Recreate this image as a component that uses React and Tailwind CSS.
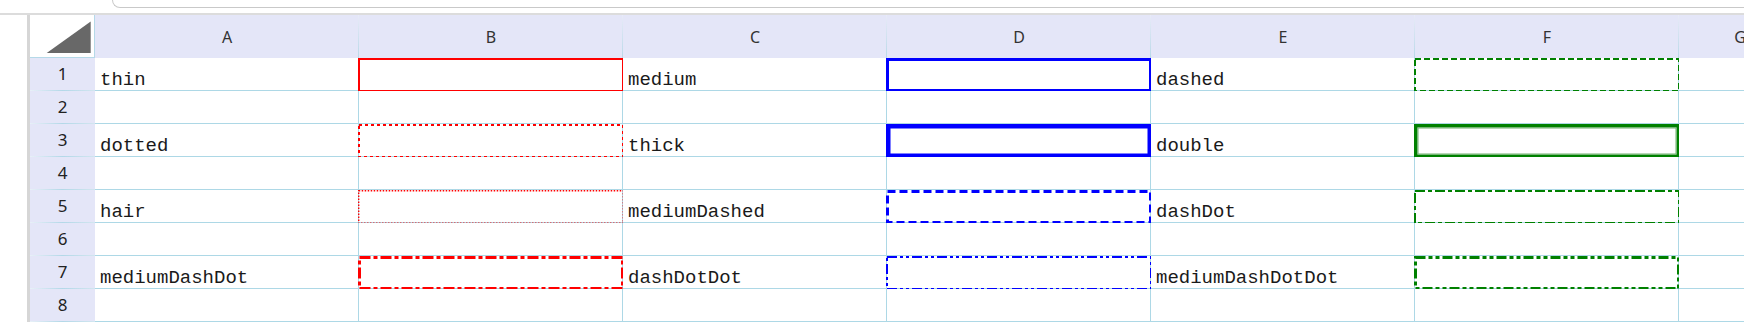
const RED = "#ff0000";
const BLUE = "#0000ff";
const GREEN = "#008000";

// border styles keyed by the name written in the cell beside them
const styles = {
  thin: { w: 2 },
  medium: { w: 3 },
  thick: { w: 4.5 },
  dashed: { w: 2, dash: "6 3" },
  dotted: { w: 2, dash: "3 3" },
  double: { w: 3.5, double: true },
  hair: { w: 1.4, dash: "1.5 1.5" },
  mediumDashed: { w: 3, dash: "8 4" },
  dashDot: { w: 2, dash: "10 3 4 3" },
  mediumDashDot: { w: 3, dash: "11 3 4 3" },
  dashDotDot: { w: 2, dash: "10 3 3 3 3 3" },
  mediumDashDotDot: { w: 3, dash: "10 3 4 3 4 3" },
};

const rows = [
  [["thin", RED], ["medium", BLUE], ["dashed", GREEN]],
  null,
  [["dotted", RED], ["thick", BLUE], ["double", GREEN]],
  null,
  [["hair", RED], ["mediumDashed", BLUE], ["dashDot", GREEN]],
  null,
  [["mediumDashDot", RED], ["dashDotDot", BLUE], ["mediumDashDotDot", GREEN]],
  null,
];

const cols = ["A", "B", "C", "D", "E", "F", "G"];

function BorderBox({ name, color }) {
  const s = styles[name];
  const W = 266;
  const H = 34;
  const h = s.w / 2;
  return (
    <svg
      width={W}
      height={H}
      className="absolute -left-px top-0 pointer-events-none"
    >
      <rect
        x={h}
        y={h}
        width={W - s.w}
        height={H - s.w}
        fill="none"
        stroke={color}
        strokeWidth={s.w}
        strokeDasharray={s.dash}
      />
      {s.double && (
        <rect
          x={s.w + 0.5}
          y={s.w + 0.5}
          width={W - 2 * s.w - 1}
          height={H - 2 * s.w - 1}
          fill="none"
          stroke="#6fae6f"
          strokeWidth={1}
        />
      )}
    </svg>
  );
}

function Cell({ children }) {
  return (
    <div className="relative border-r border-b border-[#add8e6] bg-white pl-[5px] pt-[11px] text-[19px] leading-[22px] text-[#1a1a1a] whitespace-nowrap font-['Liberation_Mono',monospace]">
      {children}
    </div>
  );
}

export default function App() {
  return (
    <div className="w-[1744px] h-[322px] overflow-hidden bg-white flex flex-col">
      <div className="h-[15px] shrink-0 bg-white border-b-2 border-[#dcdcdc]">
        <div className="ml-[112px] h-[8px] border-l border-b border-[#c9c9c9] rounded-bl-[10px]" />
      </div>
      <div className="flex flex-1 min-h-0">
        <div className="w-[27px] shrink-0 bg-white" />
        <div className="w-[3px] shrink-0 bg-[#d6d6d6]" />
        <div className="grid grid-cols-[65px_repeat(6,264px)_122px] grid-rows-[43px_repeat(8,33px)] shrink-0">
          <div className="bg-white border-r border-b border-[#b5d9e8]">
            <svg width="64" height="42">
              <polygon points="16.7,38 60.7,6.5 60.7,38" fill="#686868" />
            </svg>
          </div>
          {cols.map((c) => (
            <div
              key={c}
              className="relative flex items-center justify-center bg-[#e4e6f8] text-[16px] text-[#333] font-['Noto_Sans',sans-serif]"
            >
              {c}
              <div className="absolute right-0 top-0 bottom-0 w-px bg-gradient-to-b from-[#e8ebf8] to-[#b9d9e8]" />
            </div>
          ))}
          {rows.map((r, i) => (
            <Row key={i} n={i + 1} data={r} />
          ))}
        </div>
      </div>
    </div>
  );
}

function Row({ n, data }) {
  return (
    <>
      <div className="flex flex-col bg-[#e4e6f8]">
        <div className="flex-1 flex items-center justify-center text-[17px] text-[#222] font-['Noto_Sans',sans-serif]">
          {n}
        </div>
        <div className="h-px bg-gradient-to-r from-[#e8f0f8] via-[#b3d8e8] to-[#d2e6f0]" />
      </div>
      {data
        ? data.flatMap(([name, color]) => [
            <Cell key={name + "t"}>{name}</Cell>,
            <Cell key={name + "b"}>
              <BorderBox name={name} color={color} />
            </Cell>,
          ])
        : [0, 1, 2, 3, 4, 5].map((k) => <Cell key={k} />)}
      <Cell />
    </>
  );
}
